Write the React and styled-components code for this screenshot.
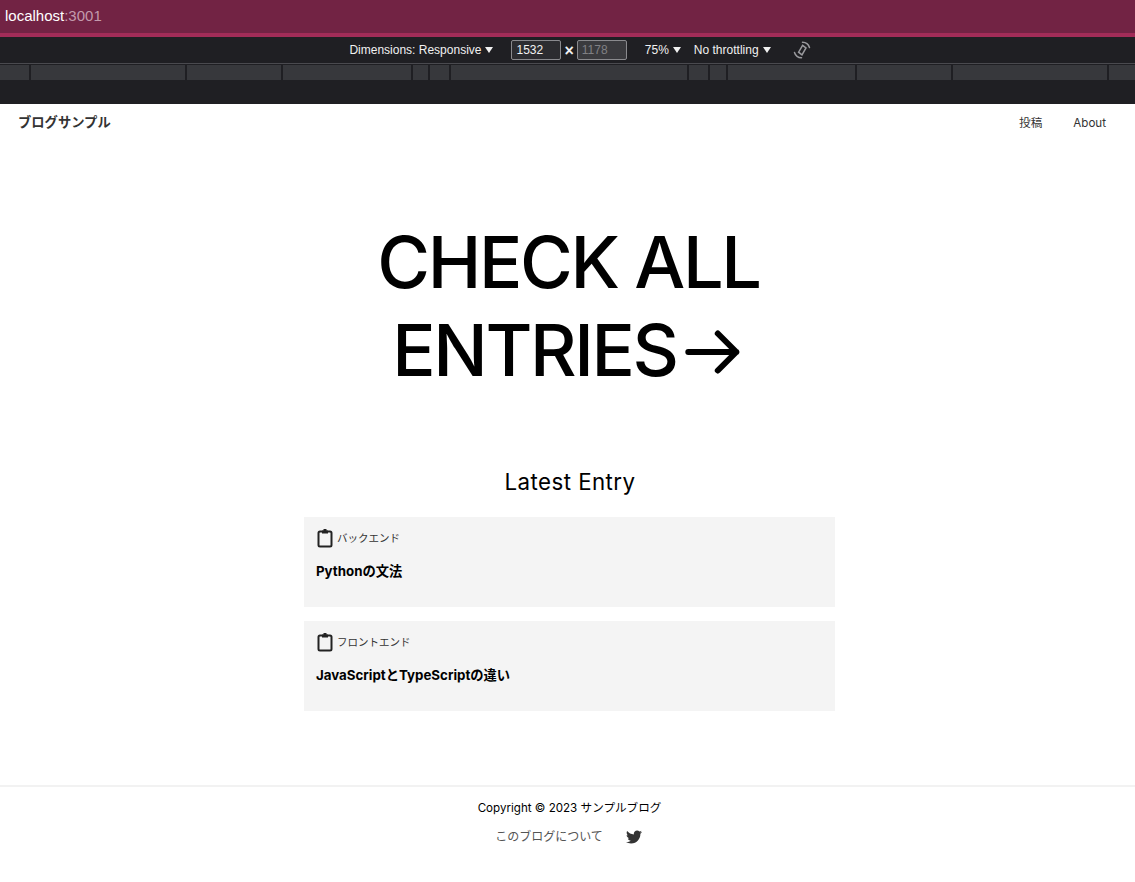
import styled, { createGlobalStyle } from 'styled-components';
import { FaTwitter } from 'react-icons/fa';

const GlobalStyle = createGlobalStyle`
  body {
    margin: 0;
    background: #fff;
    font-family: Inter, 'Noto Sans CJK JP', sans-serif;
  }
`;

const UrlBar = styled.div`
  background: #722344;
  border-bottom: 4px solid #a22c58;
  box-sizing: border-box;
  color: #fff;
  font-family: 'Liberation Sans', sans-serif;
  font-size: 15px;
  height: 37px;
  line-height: 31px;
  padding-left: 5px;

  span {
    color: #c39aac;
  }
`;

const DevToolbar = styled.div`
  align-items: center;
  background: #1f1f23;
  border-bottom: 1px solid #4a4a4f;
  color: #f1f1f1;
  display: flex;
  font-family: 'Liberation Sans', sans-serif;
  font-size: 12px;
  height: 26px;
  justify-content: center;
  padding-left: 25px;
`;

const ToolLabel = styled.span`
  align-items: center;
  display: flex;
  gap: 4px;
  margin-left: ${props => props.$gap || 0}px;
`;

const Caret = styled.i`
  border-left: 4px solid transparent;
  border-right: 4px solid transparent;
  border-top: 6px solid #f1f1f1;
  display: block;
  height: 0;
  width: 0;
`;

const SizeInput = styled.div`
  background: ${props => props.$muted ? '#3a3a3e' : '#2c2c30'};
  border: 1px solid #8a8a8e;
  border-radius: 2px;
  box-sizing: border-box;
  color: ${props => props.$muted ? '#808084' : '#f1f1f1'};
  height: 20px;
  line-height: 18px;
  margin-left: ${props => props.$gap || 0}px;
  padding-left: 4px;
  width: ${props => props.$width}px;
`;

const Times = styled.span`
  font-size: 16px;
  font-weight: 700;
  margin: 2px 3px 0 3px;
`;

const RotateIcon = styled.svg`
  display: block;
  margin-left: 22px;
`;

const Ruler = styled.div`
  background: #1f1f23;
  display: flex;
  gap: 2px;
  height: 17px;
  padding-top: 1px;
`;

const RulerPart = styled.div`
  background: #37383c;
  flex: ${props => props.$width ? `0 0 ${props.$width}px` : 1};
  height: 15px;
`;

const DarkStrip = styled.div`
  background: #1f1f23;
  height: 22px;
`;

const Header = styled.header`
  align-items: center;
  color: #333;
  display: flex;
  height: 36px;
  justify-content: space-between;
  line-height: 16px;
  padding: 0 29px 2px 18px;
`;

const Brand = styled.div`
  font-size: 13.3px;
  font-weight: 700;
`;

const Nav = styled.nav`
  align-items: baseline;
  display: flex;
  font-size: 11.6px;
  gap: 31px;
  margin-top: 2px;
`;

const Main = styled.main`
  padding-left: 4px;
`;

const Hero = styled.h1`
  color: #000;
  font-size: 72px;
  font-weight: 450;
  letter-spacing: -0.033em;
  line-height: 88px;
  margin: 76px auto 0;
  padding-right: 2px;
  text-align: center;
  width: 518px;

  svg {
    display: inline-block;
    height: 72px;
    vertical-align: -12px;
    width: 68px;
  }
`;

const Latest = styled.section`
  margin: 74px auto 0;
  width: 531px;
`;

const LatestTitle = styled.h2`
  color: #000;
  font-size: 22.3px;
  font-weight: 400;
  letter-spacing: 0.02em;
  line-height: 28px;
  margin: 0 0 21px;
  padding-left: 1px;
  text-align: center;
`;

const Card = styled.article`
  background: #f4f4f4;
  box-sizing: border-box;
  height: 90px;
  margin-bottom: 14px;
  padding: 11px 12px;
`;

const Category = styled.div`
  align-items: center;
  color: #333;
  display: flex;
  font-size: 10.5px;
  gap: 3px;
  height: 20px;
  line-height: 14px;
`;

const CategoryName = styled.span`
  margin-top: 1px;
`;

const CardTitle = styled.h3`
  color: #000;
  font-size: 13.3px;
  font-weight: 700;
  line-height: 18px;
  margin: 14px 0 0;
`;

const Footer = styled.footer`
  border-top: 2px solid #f2f2f2;
  margin-top: 74px;
  padding-top: 13px;
  padding-left: 4px;
  text-align: center;
`;

const Copyright = styled.div`
  color: #000;
  font-size: 11.6px;
  line-height: 16px;
`;

const FooterLinks = styled.div`
  align-items: center;
  color: #555;
  display: flex;
  font-size: 12px;
  gap: 23px;
  justify-content: center;
  line-height: 16px;
  margin-top: 13px;
  padding-right: 2px;

  svg {
    color: #333;
    height: 16px;
    width: 16px;
  }
`;

const ClipboardIcon = () => (
  <svg width="18" height="20" viewBox="0 0 18 20" fill="none">
    <rect x="2.5" y="3.5" width="13" height="15" rx="1.5" stroke="#222" strokeWidth="2" />
    <path d="M6 2.5h6v3H6z" fill="#222" />
    <rect x="7.5" y="1" width="3" height="2" fill="#222" />
  </svg>
);

const ArrowIcon = () => (
  <svg viewBox="0 0 68 72" fill="none" stroke="#000" strokeWidth="6" strokeLinecap="round" strokeLinejoin="round">
    <path d="M11.3 36h48M40.8 17.5 59.3 36 40.8 54.5" />
  </svg>
);

const entries = [
  { category: 'バックエンド', title: 'Pythonの文法' },
  { category: 'フロントエンド', title: 'JavaScriptとTypeScriptの違い' },
];

const rulerParts = [29, 154, 94, 128, 15, 19, 236, 19, 16, 127, 94, 154, 0];

const App = () => {
  return (
    <>
      <GlobalStyle />
      <UrlBar>localhost<span>:3001</span></UrlBar>
      <DevToolbar>
        <ToolLabel>Dimensions: Responsive <Caret /></ToolLabel>
        <SizeInput $width={50} $gap={18}>1532</SizeInput>
        <Times>×</Times>
        <SizeInput $width={50} $muted>1178</SizeInput>
        <ToolLabel $gap={18}>75% <Caret /></ToolLabel>
        <ToolLabel $gap={13}>No throttling <Caret /></ToolLabel>
        <RotateIcon width="18" height="18" viewBox="0 0 18 18" fill="none" stroke="#9a9a9e" strokeWidth="1.5" strokeLinecap="round">
          <path d="M9.6 4.4 13 7 9 13.8 5.6 11.2Z" />
          <path d="M9.5 1.2a7.5 7.5 0 0 1 7 5.3M8.5 16.8a7.5 7.5 0 0 1-7-5.3" />
        </RotateIcon>
      </DevToolbar>
      <Ruler>
        {rulerParts.map((width, i) => <RulerPart key={i} $width={width} />)}
      </Ruler>
      <DarkStrip />
      <Header>
        <Brand>ブログサンプル</Brand>
        <Nav>
          <span>投稿</span>
          <span>About</span>
        </Nav>
      </Header>
      <Main>
        <Hero>CHECK ALL ENTRIES<ArrowIcon /></Hero>
        <Latest>
          <LatestTitle>Latest Entry</LatestTitle>
          {entries.map(entry => (
            <Card key={entry.title}>
              <Category>
                <ClipboardIcon />
                <CategoryName>{entry.category}</CategoryName>
              </Category>
              <CardTitle>{entry.title}</CardTitle>
            </Card>
          ))}
        </Latest>
      </Main>
      <Footer>
        <Copyright>Copyright © 2023 サンプルブログ</Copyright>
        <FooterLinks>
          <span>このブログについて</span>
          <FaTwitter />
        </FooterLinks>
      </Footer>
    </>
  );
};

export default App;
